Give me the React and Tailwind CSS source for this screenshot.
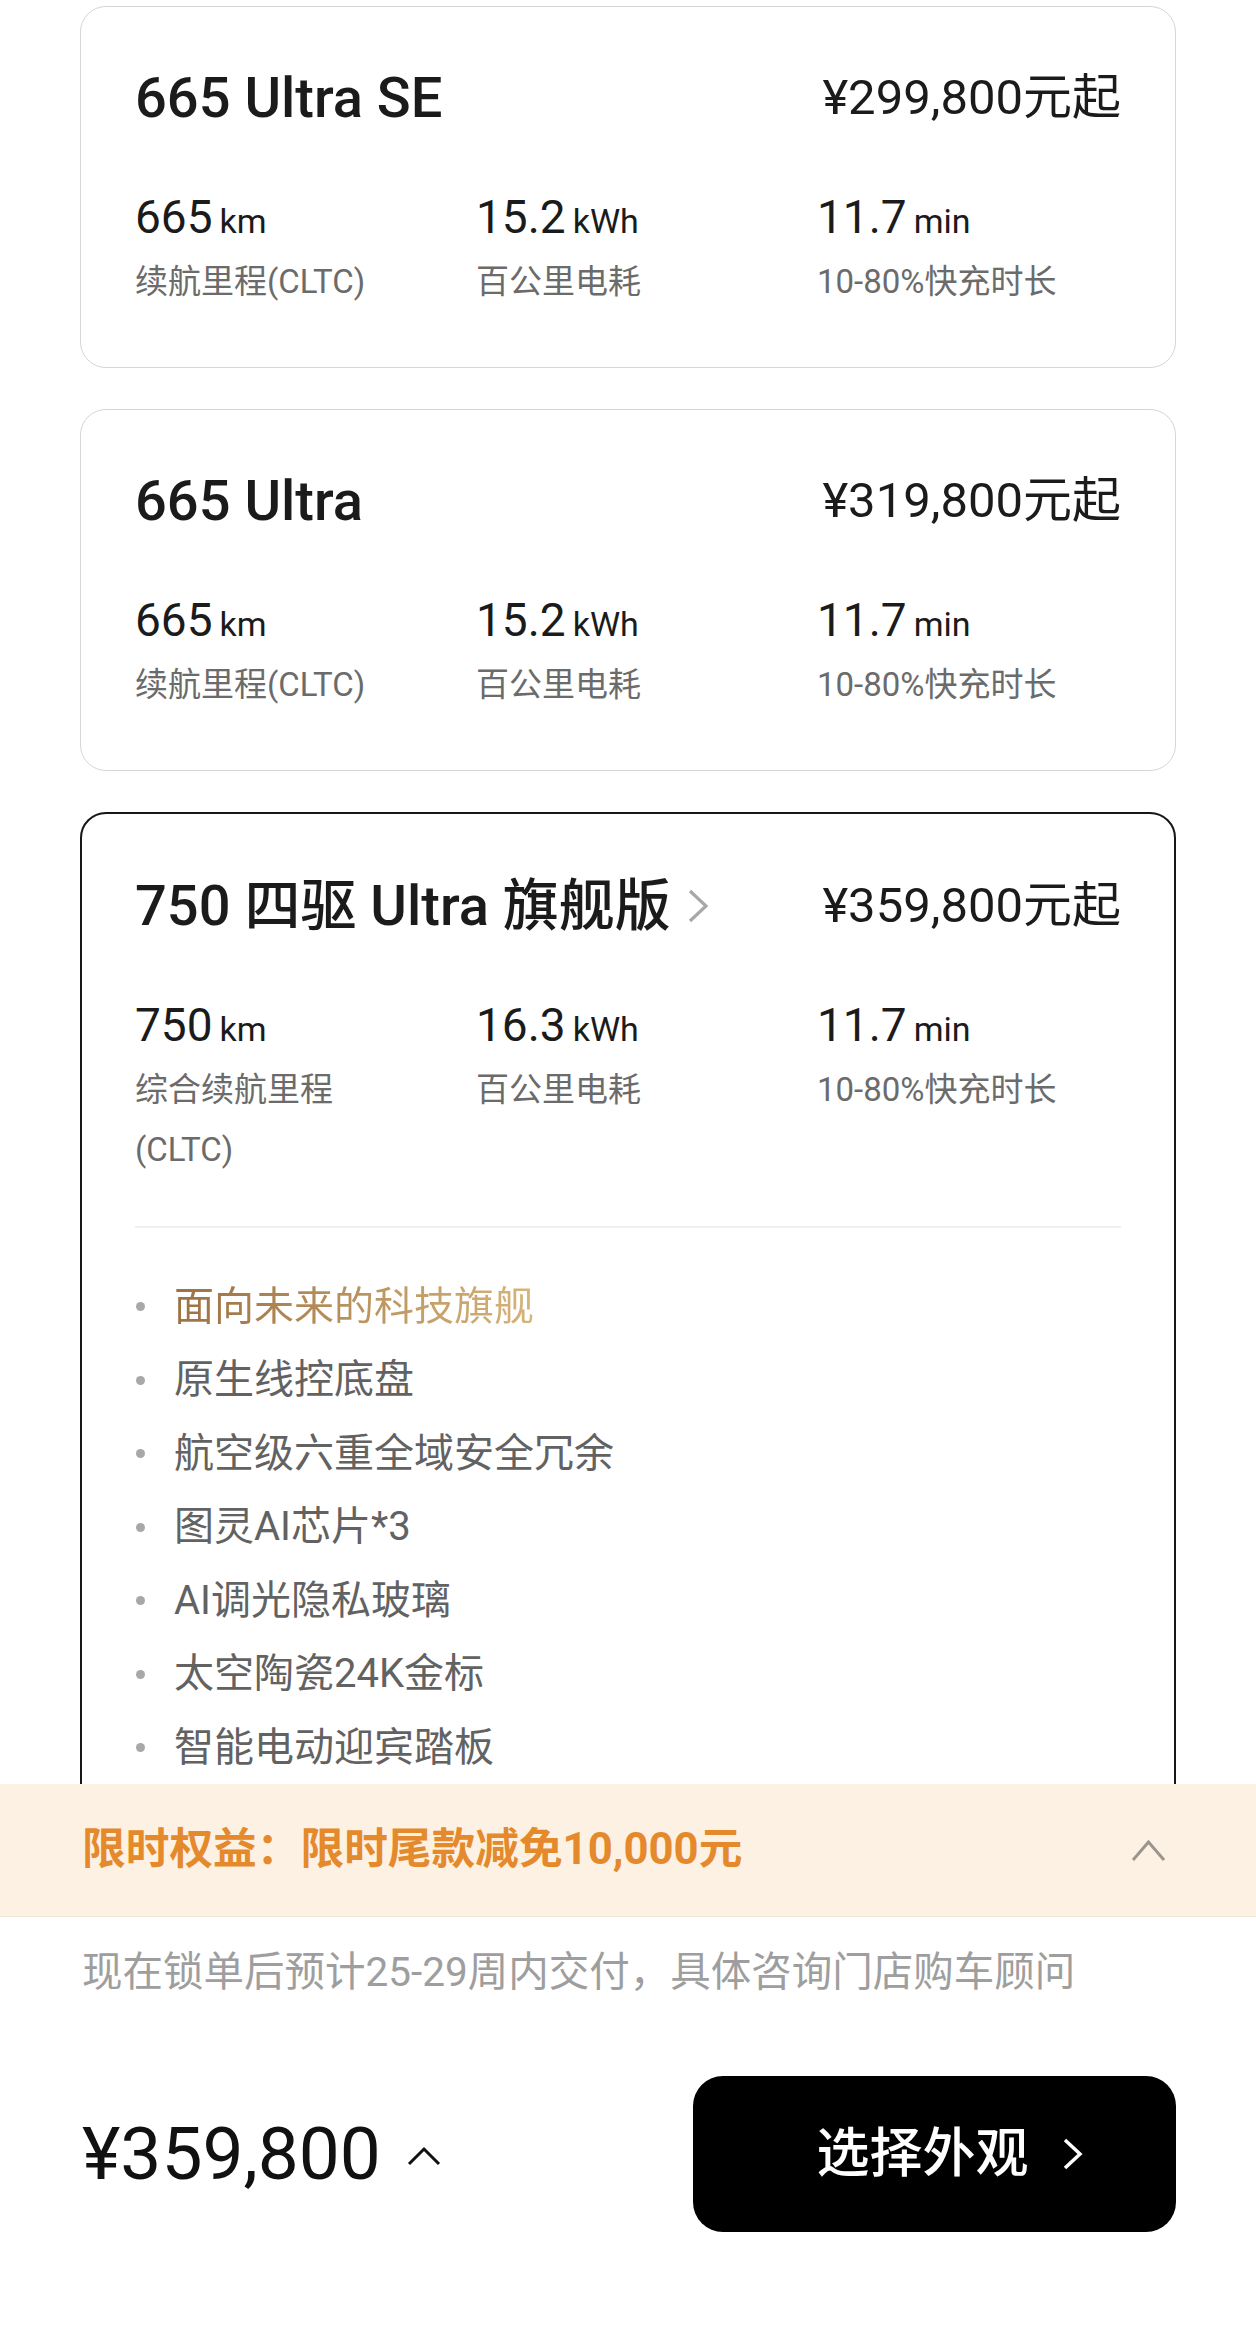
import React from "react";

const trims = [
  {
    name: "665 Ultra SE",
    price: "¥299,800元起",
    stats: [
      { value: "665", unit: "km", label: "续航里程(CLTC)" },
      { value: "15.2", unit: "kWh", label: "百公里电耗" },
      { value: "11.7", unit: "min", label: "10-80%快充时长" },
    ],
  },
  {
    name: "665 Ultra",
    price: "¥319,800元起",
    stats: [
      { value: "665", unit: "km", label: "续航里程(CLTC)" },
      { value: "15.2", unit: "kWh", label: "百公里电耗" },
      { value: "11.7", unit: "min", label: "10-80%快充时长" },
    ],
  },
];

const flagship = {
  name: "750 四驱 Ultra 旗舰版",
  price: "¥359,800元起",
  stats: [
    { value: "750", unit: "km", label: "综合续航里程(CLTC)" },
    { value: "16.3", unit: "kWh", label: "百公里电耗" },
    { value: "11.7", unit: "min", label: "10-80%快充时长" },
  ],
  features: [
    "原生线控底盘",
    "航空级六重全域安全冗余",
    "图灵AI芯片*3",
    "AI调光隐私玻璃",
    "太空陶瓷24K金标",
    "智能电动迎宾踏板",
  ],
};

function StatGrid({ stats }) {
  return (
    <div className="mt-[59px] grid grid-cols-[270px_270px_270px] gap-x-[71px]">
      {stats.map((s) => (
        <div key={s.label}>
          <div className="text-[46px] leading-[56px] text-[#1b1b1b]">
            {s.value}
            <span className="ml-[7px] text-[34px] leading-none">{s.unit}</span>
          </div>
          <div className="mt-[7px] text-[33px] leading-[60px] text-[#6b6b6b]">{s.label}</div>
        </div>
      ))}
    </div>
  );
}

function TrimCard({ trim }) {
  return (
    <div className="rounded-[26px] border border-[#d6d6d6] px-[54px] pt-[59px] pb-[55px]">
      <div className="flex h-[64px] items-center justify-between">
        <div className="text-[56px] font-medium leading-[64px] text-[#1b1b1b]">{trim.name}</div>
        <div className="text-[49px] leading-[64px] text-[#1b1b1b]">{trim.price}</div>
      </div>
      <StatGrid stats={trim.stats} />
    </div>
  );
}

export default function App() {
  return (
    <div className="relative h-[2344px] w-full overflow-hidden bg-white font-[Roboto,'Noto_Sans_CJK_SC',sans-serif]">
      <div className="flex flex-col gap-[41px] px-[80px] pt-[6px]">
        {trims.map((t) => (
          <TrimCard key={t.name} trim={t} />
        ))}

        {/* selected trim */}
        <div className="rounded-[26px] border-2 border-[#161616] px-[53px] pt-[60px] pb-[200px]">
          <div className="flex h-[64px] items-center justify-between">
            <div className="flex items-center text-[56px] font-medium leading-[64px] text-[#1b1b1b]">
              {flagship.name}
              <svg className="ml-[16px]" width="22" height="34" viewBox="0 0 22 34" fill="none">
                <polyline points="3,2 19,17 3,32" stroke="#a8a8a8" strokeWidth="3.2" />
              </svg>
            </div>
            <div className="text-[49px] leading-[64px] text-[#1b1b1b]">{flagship.price}</div>
          </div>
          <StatGrid stats={flagship.stats} />

          <div className="mt-[46px] h-[2px] bg-[#efefef]" />

          <ul className="mt-[42px]">
            <li className="flex h-[73.5px] items-center">
              <span className="ml-[1px] h-[9px] w-[9px] rounded-full bg-[#a8a8a8]" />
              <span className="ml-[29px] inline-block bg-linear-to-r from-[#9d7143] to-[#d6b47a] bg-clip-text text-[40px] leading-[56px] text-transparent">
                面向未来的科技旗舰
              </span>
            </li>
            {flagship.features.map((f) => (
              <li key={f} className="flex h-[73.5px] items-center">
                <span className="ml-[1px] h-[9px] w-[9px] rounded-full bg-[#a8a8a8]" />
                <span className="ml-[29px] text-[40px] leading-[56px] text-[#626262]">{f}</span>
              </li>
            ))}
          </ul>
        </div>
      </div>

      {/* sticky bottom panel */}
      <div className="absolute inset-x-0 bottom-0 bg-white">
        <div className="flex h-[133px] items-center justify-between border-b border-[#efe6da] bg-[#fdf1e3] pl-[82px] pr-[90px]">
          <span className="text-[43.7px] font-bold leading-none text-[#e48a2c]">限时权益：限时尾款减免10,000元</span>
          <svg width="35" height="23" viewBox="0 0 35 23" fill="none">
            <polyline points="2,21 17.5,3 33,21" stroke="#9b958f" strokeWidth="3" />
          </svg>
        </div>

        <p className="pl-[82px] pt-[27px] text-[40.5px] leading-[56px] text-[#9e9e9e]">
          现在锁单后预计25-29周内交付，具体咨询门店购车顾问
        </p>

        <div className="mt-[76px] flex items-center justify-between pb-[112px] pl-[82px] pr-[80px]">
          <div className="flex items-center">
            <span className="text-[73px] leading-none text-[#111111]">¥359,800</span>
            <svg className="ml-[26px] mt-[4px]" width="34" height="20" viewBox="0 0 34 20" fill="none">
              <polyline points="2,18 17,3 32,18" stroke="#111111" strokeWidth="3" />
            </svg>
          </div>
          <button className="flex h-[156px] w-[483px] items-center justify-center rounded-[30px] bg-black pl-[30px]">
            <span className="text-[53px] font-medium leading-none text-white">选择外观</span>
            <svg className="ml-[33px]" width="21" height="32" viewBox="0 0 21 32" fill="none">
              <polyline points="3,2 18,16 3,30" stroke="#ffffff" strokeWidth="3.5" />
            </svg>
          </button>
        </div>
      </div>
    </div>
  );
}
